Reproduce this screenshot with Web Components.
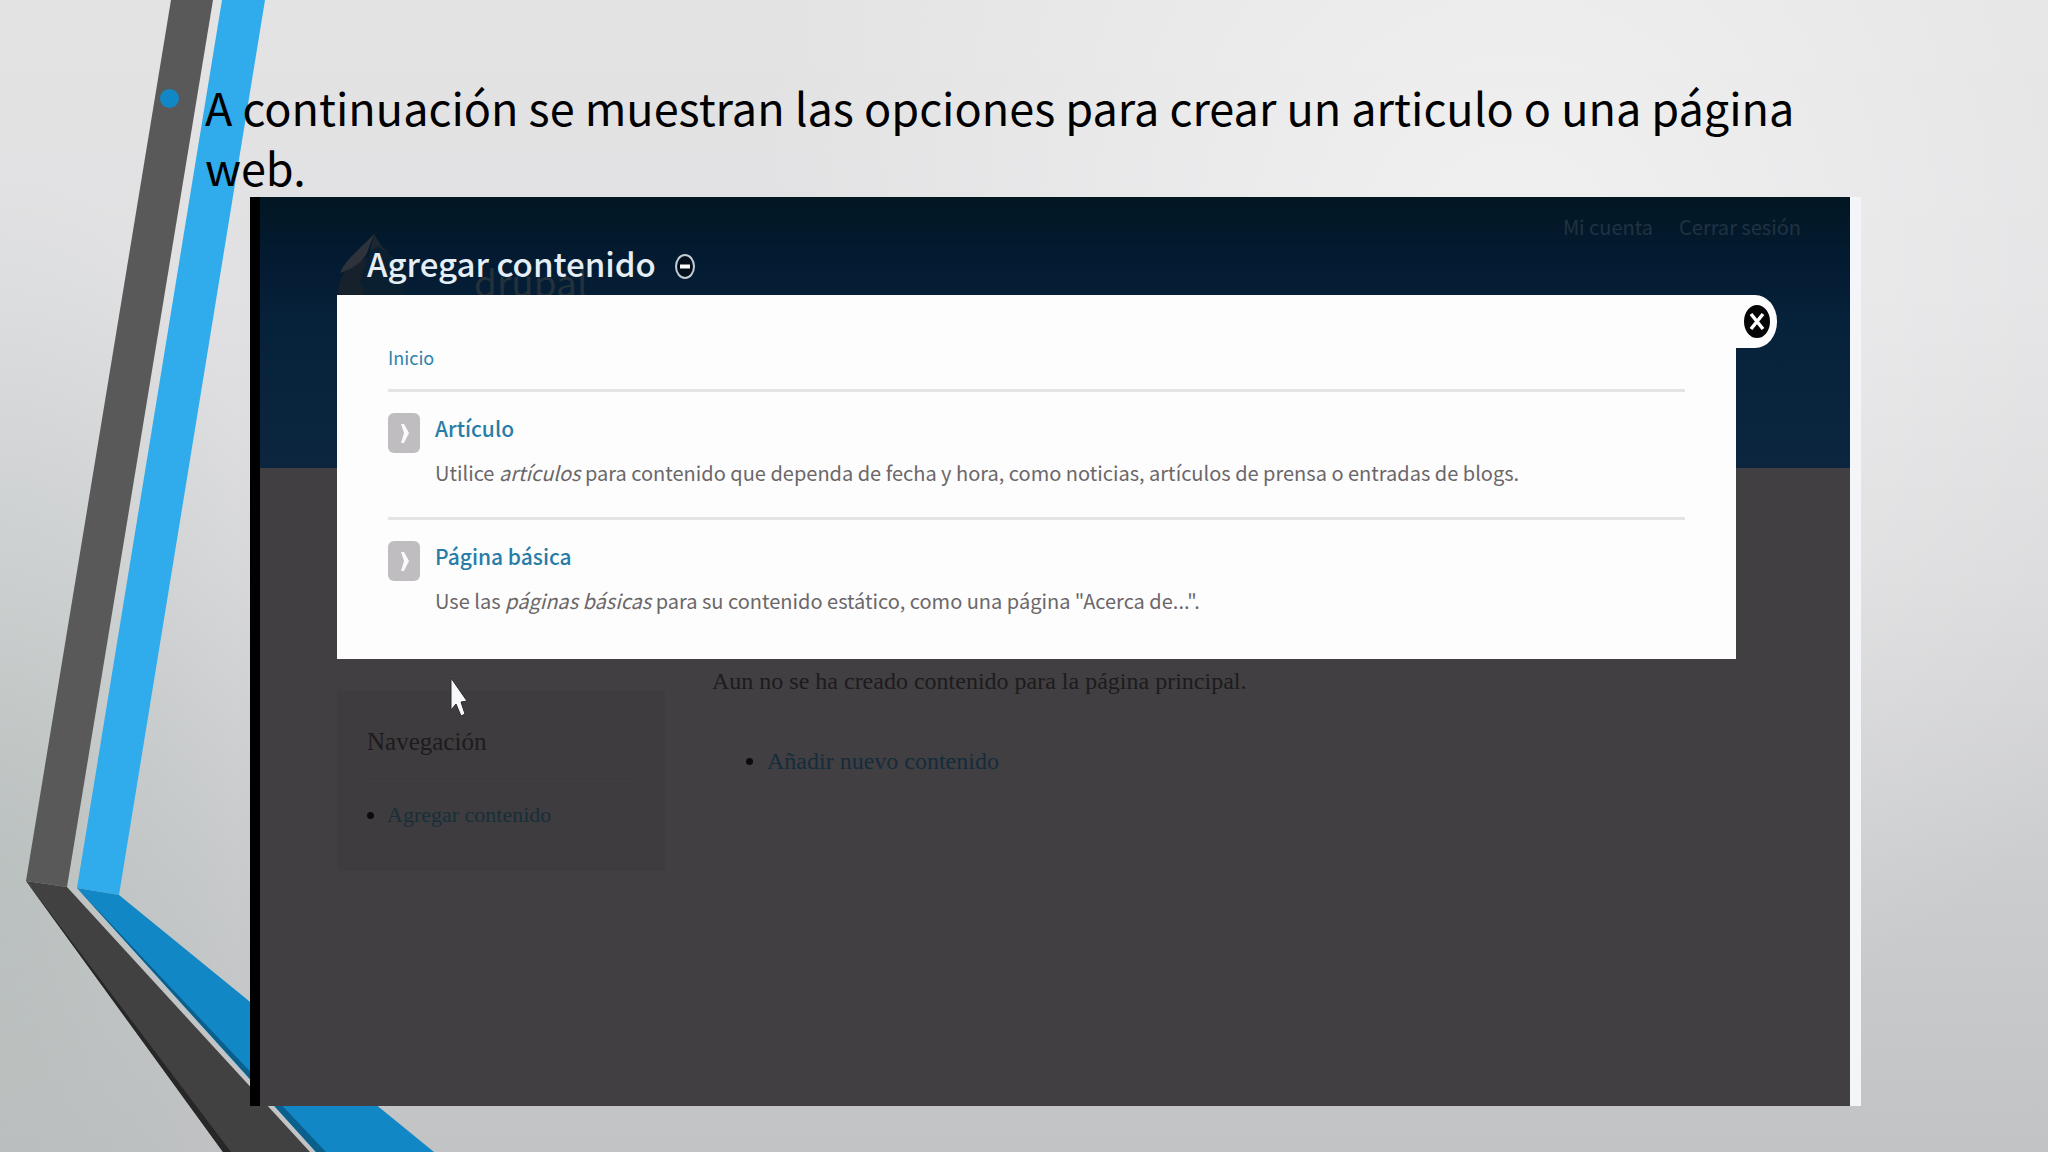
<!DOCTYPE html>
<html lang="es">
<head>
<meta charset="UTF-8">
<title>Agregar contenido</title>
<style>
  body {
    margin: 0;
    font-family: 'Noto Sans', sans-serif;
  }
</style>
</head>
<body>
<slide-page>
  <slide-ribbon slot="deco"></slide-ribbon>
  <slide-bullet>A continuación se muestran las opciones para crear un articulo o una página web.</slide-bullet>
  <screen-capture>
    <site-page slot="page"></site-page>
    <content-overlay slot="overlay" heading="Agregar contenido">
      <content-option label="Artículo">Utilice <em>artículos</em> para contenido que dependa de fecha y hora, como noticias, artículos de prensa o entradas de blogs.</content-option>
      <content-option label="Página básica">Use las <em>páginas básicas</em> para su contenido estático, como una página "Acerca de...".</content-option>
    </content-overlay>
  </screen-capture>
</slide-page>

<script>
// Fondo y estructura general de la diapositiva
class SlidePage extends HTMLElement {
  constructor() {
    super();
    this.attachShadow({ mode: 'open' });
    this.shadowRoot.innerHTML = `
      <style>
        :host {
          display: flex;
          flex-direction: column;
          position: relative;
          box-sizing: border-box;
          min-height: 100vh;
          padding: 77px 187px 46px 160px;
          overflow: hidden;
          background:
            radial-gradient(ellipse 15% 60% at 0% 75%, rgba(160,175,168,.4), rgba(160,175,168,0)),
            radial-gradient(ellipse 38% 70% at 74% 22%, rgba(255,255,255,.5), rgba(255,255,255,0)),
            linear-gradient(180deg, #e3e3e4 0%, #e1e1e3 25%, #d9d9db 50%, #cccdcf 75%, #c2c3c5 100%);
        }
        main {
          display: flex;
          flex-direction: column;
          flex: 1;
          position: relative;
        }
      </style>
      <slot name="deco"></slot>
      <main><slot></slot></main>
    `;
  }
}

// Cintas gris y azul del lado izquierdo
class SlideRibbon extends HTMLElement {
  constructor() {
    super();
    this.attachShadow({ mode: 'open' });
    this.shadowRoot.innerHTML = `
      <style>
        :host {
          display: block;
          position: absolute;
          top: 0;
          bottom: 0;
          left: 0;
        }
        svg {
          display: block;
          height: 100%;
        }
      </style>
      <svg viewBox="0 0 440 1152" aria-hidden="true">
        <polygon points="171,0 213,0 67,887 26,881" fill="#595959"/>
        <polygon points="222,0 265,0 119,895 77,888" fill="#30abeb"/>
        <polygon points="26,881 67,887 310,1152 223,1152" fill="#404140"/>
        <polygon points="26,881 231,1152 223,1152" fill="#262726"/>
        <polygon points="77,888 119,895 434,1152 316,1152" fill="#1287c5"/>
        <polygon points="77,888 326,1152 316,1152" fill="#0b5f8c"/>
      </svg>
    `;
  }
}

// Texto principal con su viñeta
class SlideBullet extends HTMLElement {
  constructor() {
    super();
    this.attachShadow({ mode: 'open' });
    this.shadowRoot.innerHTML = `
      <style>
        :host {
          display: block;
          color: #000;
          font-family: 'Noto Sans CJK SC', 'Noto Sans', sans-serif;
          font-size: 45px;
          line-height: 60px;
        }
        ul {
          margin: 0;
          padding: 0;
          list-style: none;
        }
        li {
          display: flex;
          gap: 26px;
        }
        .dot {
          flex: none;
          width: 19px;
          height: 19px;
          margin-top: 12px;
          border-radius: 50%;
          background: #1287c5;
        }
        .text { max-width: 1620px; }
      </style>
      <ul>
        <li><span class="dot"></span><span class="text"><slot></slot></span></li>
      </ul>
    `;
  }
}

// Ventana capturada: la página queda debajo y el overlay encima
class ScreenCapture extends HTMLElement {
  constructor() {
    super();
    this.attachShadow({ mode: 'open' });
    this.shadowRoot.innerHTML = `
      <style>
        :host {
          display: grid;
          flex: 1;
          margin-left: 90px;
          border-left: 10px solid #000;
          border-right: 11px solid #f4f5f8;
          background: #413f41;
        }
        ::slotted(*) { grid-area: 1 / 1; }
      </style>
      <slot name="page"></slot>
      <slot name="overlay"></slot>
    `;
  }
}

// Página del sitio, oscurecida por el overlay
class SitePage extends HTMLElement {
  constructor() {
    super();
    this.attachShadow({ mode: 'open' });
    this.shadowRoot.innerHTML = `
      <style>
        :host {
          display: block;
          font-family: 'Liberation Serif', serif;
          font-size: 24px;
          line-height: 32px;
          color: #1d1b1d;
        }
        header {
          display: flex;
          justify-content: space-between;
          align-items: flex-start;
          box-sizing: border-box;
          height: 271px;
          padding: 14px 49px 0 76px;
          background: linear-gradient(180deg, #021722 0%, #031a30 20%, #06213a 45%, #0b263e 100%);
          font-family: 'Noto Sans CJK SC', sans-serif;
        }
        .brand {
          display: flex;
          align-items: flex-end;
          gap: 68px;
          margin-top: 20px;
          color: #22313b;
          font-size: 37px;
          line-height: 36px;
        }
        .brand svg { display: block; }
        nav {
          display: flex;
          gap: 26px;
          font-size: 20px;
        }
        nav a { color: #1f3342; }
        a {
          color: #142c3d;
          text-decoration: none;
        }
        .columns {
          display: grid;
          grid-template-columns: 328px 1fr;
          gap: 47px;
          padding: 197px 77px 0;
        }
        aside {
          box-sizing: border-box;
          height: 180px;
          margin-top: 26px;
          padding: 35px 30px 0;
          background: #3e3c3e;
        }
        h2 {
          margin: 0 0 20px;
          padding-bottom: 20px;
          border-bottom: 1px solid #3b393b;
          font-size: 25px;
          font-weight: normal;
          line-height: 32px;
        }
        p { margin: 0; }
        ul {
          margin: 0;
          padding-left: 20px;
        }
        section ul {
          margin-top: 48px;
          padding-left: 55px;
        }
        li::marker { color: #0c0b0c; }
        aside ul { font-size: 22px; }
        aside a { color: #172f3a; }
      </style>
      <header>
        <div class="brand">
          <svg width="70" height="68" viewBox="0 0 70 68" aria-hidden="true">
            <path d="M1 66C2 52 4 46 8 40L32 28L38 3L50 20L66 34L70 68Z" fill="#0a1f30"/>
            <path d="M1 66C2 54 6 44 14 36L32 26L24 50L30 68Z" fill="#16212c"/>
            <path d="M4 42C10 28 22 20 38 3L31 22C26 32 16 38 4 42Z" fill="#2d323b"/>
            <path d="M38 3L46 16L54 22L42 16L34 20Z" fill="#1c2732"/>
          </svg>
          <span>drupal</span>
        </div>
        <nav>
          <a href="#">Mi cuenta</a>
          <a href="#">Cerrar sesión</a>
        </nav>
      </header>
      <div class="columns">
        <aside>
          <h2>Navegación</h2>
          <ul><li><a href="#">Agregar contenido</a></li></ul>
        </aside>
        <section>
          <p>Aun no se ha creado contenido para la página principal.</p>
          <ul><li><a href="#">Añadir nuevo contenido</a></li></ul>
        </section>
      </div>
    `;
  }
}

// Panel blanco con las opciones de contenido
class ContentOverlay extends HTMLElement {
  constructor() {
    super();
    this.attachShadow({ mode: 'open' });
  }

  connectedCallback() {
    this.shadowRoot.innerHTML = `
      <style>
        :host {
          display: block;
          position: relative;
          padding: 36px 114px 0 77px;
          font-family: 'Noto Sans CJK SC', sans-serif;
        }
        .title {
          display: flex;
          align-items: center;
          gap: 18px;
          height: 60px;
          padding: 0 0 2px 30px;
        }
        h1 {
          margin: 0;
          color: #e6eef5;
          font-size: 33px;
          font-weight: 500;
          line-height: 56px;
        }
        button {
          padding: 0;
          border: 0;
          background: none;
        }
        button svg { display: block; }
        .shortcut { margin-top: 6px; }
        .panel {
          position: relative;
          box-sizing: border-box;
          min-height: 364px;
          padding: 46px 51px 0;
          background: #fdfdfd;
        }
        .close {
          display: flex;
          align-items: center;
          justify-content: center;
          position: absolute;
          top: 0;
          left: 100%;
          width: 41px;
          height: 53px;
          border-radius: 0 22px 22px 0 / 0 26px 26px 0;
          background: #fdfdfd;
        }
        .home {
          display: block;
          padding-bottom: 16px;
          color: #2f83ac;
          font-size: 18px;
          line-height: 32px;
          text-decoration: none;
        }
        .pointer {
          position: absolute;
          top: 479px;
          left: 190px;
        }
      </style>
      <div class="title">
        <h1>${this.getAttribute('heading')}</h1>
        <button class="shortcut" aria-label="Quitar del acceso directo">
          <svg width="22" height="27" viewBox="0 0 22 27">
            <ellipse cx="11" cy="13.500" rx="9" ry="11.500" fill="#06101c" stroke="#c3cdd6" stroke-width="2"/>
            <path d="M6 13.500H16" stroke="#fff" stroke-width="4"/>
          </svg>
        </button>
      </div>
      <div class="panel">
        <a class="home" href="#">Inicio</a>
        <slot></slot>
        <button class="close" aria-label="Cerrar">
          <svg width="26" height="33" viewBox="0 0 26 33">
            <ellipse cx="13" cy="16.500" rx="13" ry="16.500" fill="#050505"/>
            <path d="M7 9L19 24M19 9L7 24" stroke="#fff" stroke-width="3.500"/>
          </svg>
        </button>
      </div>
      <svg class="pointer" width="18" height="42" viewBox="0 0 18 42" aria-hidden="true">
        <path d="M1 2L1 34L6 28L11 40L15 38L11 26L17 25Z" fill="#f8f8fa" stroke="#2a282a" stroke-width="1"/>
      </svg>
    `;
  }
}

// Cada tipo de contenido disponible
class ContentOption extends HTMLElement {
  constructor() {
    super();
    this.attachShadow({ mode: 'open' });
  }

  connectedCallback() {
    this.shadowRoot.innerHTML = `
      <style>
        :host {
          display: flex;
          gap: 15px;
          box-sizing: border-box;
          height: 128px;
          padding-top: 21px;
          border-top: 3px solid #e5e3e4;
        }
        .icon { flex: none; }
        a {
          display: block;
          color: #287da8;
          font-size: 21px;
          font-weight: 500;
          line-height: 30px;
          text-decoration: none;
        }
        p {
          margin: 14px 0 0;
          color: #6b6769;
          font-size: 20px;
          line-height: 32px;
        }
      </style>
      <svg class="icon" width="32" height="40" viewBox="0 0 32 40" aria-hidden="true">
        <rect width="32" height="40" rx="6" fill="#bfbdbf"/>
        <path d="M13 11L16 11L21 20L16 30L13 30L16 20Z" fill="#fafafa"/>
      </svg>
      <div>
        <a href="#">${this.getAttribute('label')}</a>
        <p><slot></slot></p>
      </div>
    `;
  }
}

customElements.define('slide-page', SlidePage);
customElements.define('slide-ribbon', SlideRibbon);
customElements.define('slide-bullet', SlideBullet);
customElements.define('screen-capture', ScreenCapture);
customElements.define('site-page', SitePage);
customElements.define('content-overlay', ContentOverlay);
customElements.define('content-option', ContentOption);
</script>
</body>
</html>
